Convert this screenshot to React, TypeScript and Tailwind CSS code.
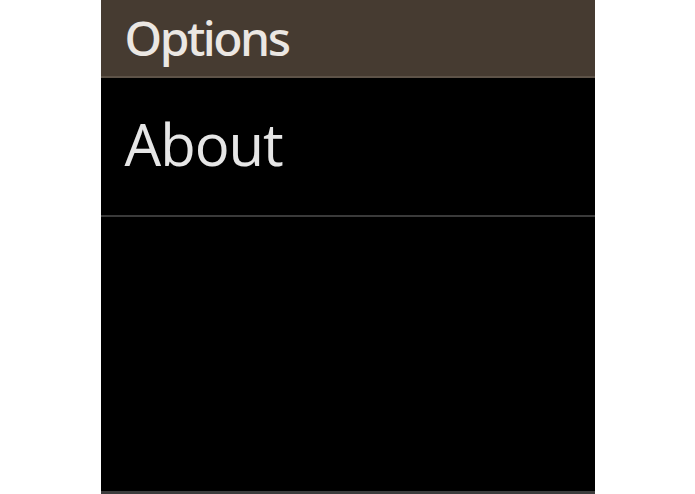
import React from 'react';

const App = () => {
  return (
    <div className="min-h-screen bg-white flex justify-center" style={{ fontFamily: '"Open Sans", "Noto Sans", sans-serif' }}>
      <div className="w-[494px] h-[494px] bg-black flex flex-col border-b-[3px] border-[#3c3c3c]">
        <div className="h-[78px] bg-[#463b31] border-b-2 border-[#5e5348] px-6 pt-[14px]">
          <h1 className="font-['Noto_Sans',sans-serif] text-[48px] font-medium tracking-[-2.5px] leading-none text-[#ebe7e3]">Options</h1>
        </div>
        <div className="px-6 pt-[37px] pb-[42px] border-b-2 border-[#3a3a3a]">
          <span className="text-[58px] tracking-[-1px] leading-none text-[#e6e6e6]">About</span>
        </div>
        <div className="flex-1" />
      </div>
    </div>
  );
};

export default App;
